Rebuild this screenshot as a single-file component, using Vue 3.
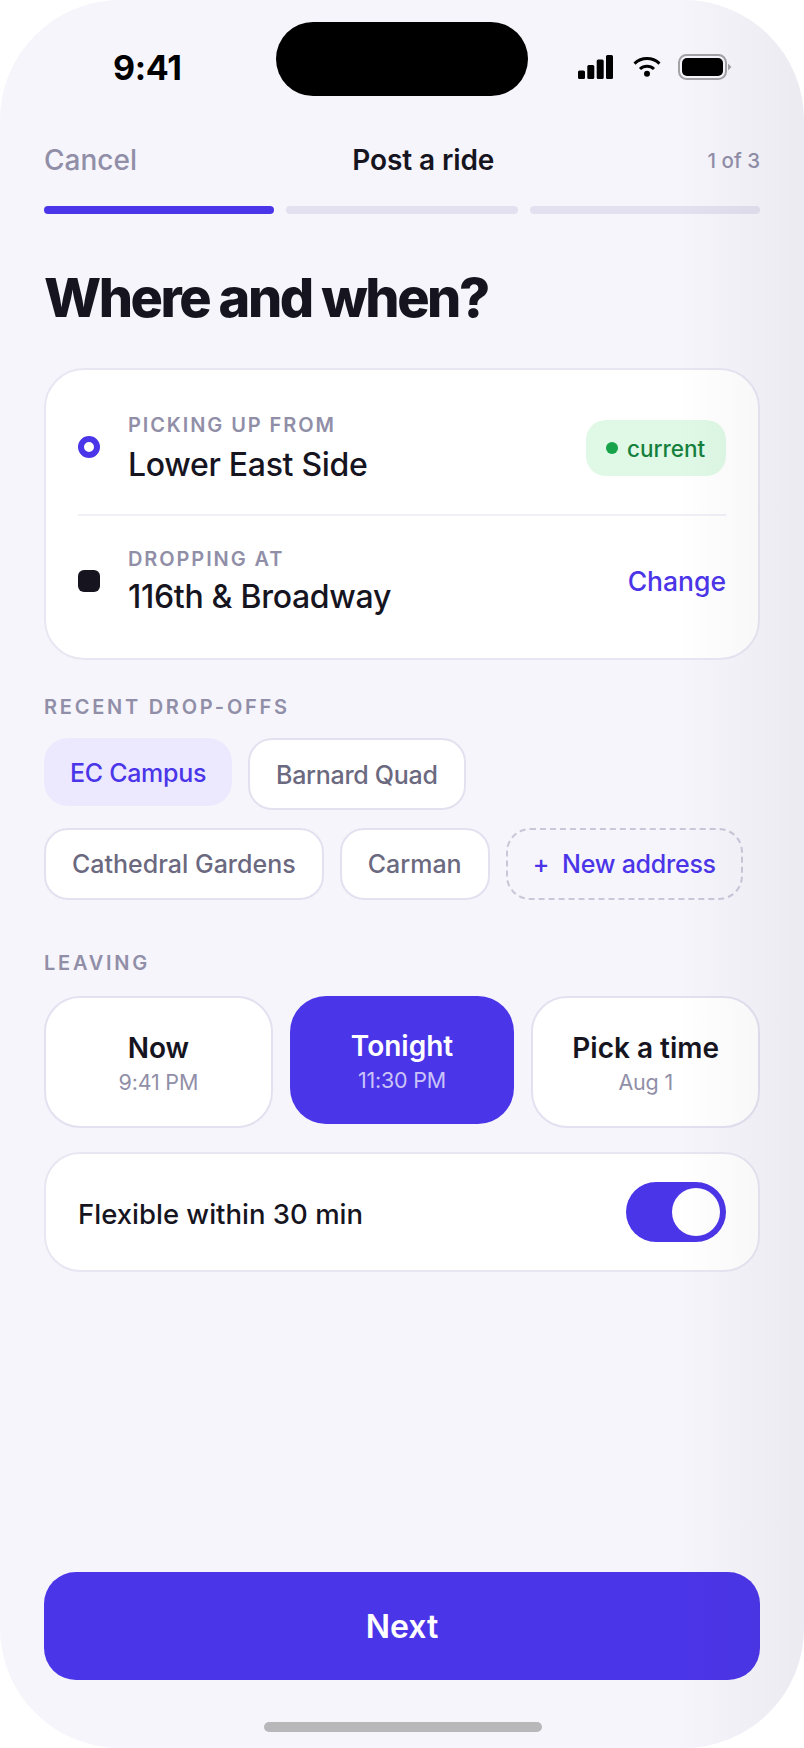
<script setup>
import { ref } from 'vue'

// первая строка чипов и вторая
const chipsTop = ref([
  { name: 'EC Campus', active: true },
  { name: 'Barnard Quad', active: false },
])
const chipsBottom = ref(['Cathedral Gardens', 'Carman'])

const times = ref([
  { id: 1, title: 'Now', sub: '9:41 PM', active: false },
  { id: 2, title: 'Tonight', sub: '11:30 PM', active: true },
  { id: 3, title: 'Pick a time', sub: 'Aug 1', active: false },
])
</script>

<template>
  <div class="phone">
    <div class="island"></div>

    <div class="status">
      <span class="clock">9:41</span>
      <div class="status-icons">
        <svg class="signal" width="35" height="24" viewBox="0 0 35 24">
          <rect x="0" y="15.4" width="7" height="8.6" rx="1.5" />
          <rect x="9.3" y="10" width="7" height="14" rx="1.5" />
          <rect x="18.7" y="4.5" width="7" height="19.5" rx="1.5" />
          <rect x="28" y="0" width="7" height="24" rx="1.5" />
        </svg>
        <svg class="wifi" width="28" height="21" viewBox="0 0 28 21">
          <path d="M1.5 7.6 A18 18 0 0 1 26.5 7.6" fill="none" stroke="#000" stroke-width="3" />
          <path d="M7 13 A10 10 0 0 1 21 13" fill="none" stroke="#000" stroke-width="3" />
          <circle cx="14" cy="17.8" r="3" fill="#000" />
        </svg>
        <svg class="battery" width="54" height="26" viewBox="0 0 54 26">
          <rect x="1" y="1" width="47" height="24" rx="7.5" fill="none" stroke="#a3a3a6" stroke-width="2" />
          <rect x="4" y="4" width="41" height="18" rx="5" fill="#000" />
          <path d="M50 9.5 L53.5 13 L50 16.5 Z" fill="#a3a3a6" />
        </svg>
      </div>
    </div>

    <div class="content">
      <div class="nav">
        <span class="cancel">Cancel</span>
        <span class="nav-title">Post a ride</span>
        <span class="step">1 of 3</span>
      </div>

      <div class="progress">
        <div class="seg seg-on"></div>
        <div class="seg seg-mid"></div>
        <div class="seg"></div>
      </div>

      <h1 class="title">Where and when?</h1>

      <div class="route card">
        <div class="route-row first">
          <span class="dot-from"></span>
          <div class="route-text">
            <div class="route-label">PICKING UP FROM</div>
            <div class="route-value">Lower East Side</div>
          </div>
          <span class="badge"><i class="badge-dot"></i>current</span>
        </div>
        <div class="divider"></div>
        <div class="route-row second">
          <span class="dot-to"></span>
          <div class="route-text">
            <div class="route-label">DROPPING AT</div>
            <div class="route-value">116th &amp; Broadway</div>
          </div>
          <span class="change">Change</span>
        </div>
      </div>

      <div class="section-label recent">RECENT DROP-OFFS</div>
      <div class="chips">
        <div class="chip-row chip-row-top">
          <span
            v-for="chip in chipsTop"
            :key="chip.name"
            class="chip"
            :class="{ 'chip-on': chip.active }"
          >{{ chip.name }}</span>
        </div>
        <div class="chip-row">
          <span v-for="name in chipsBottom" :key="name" class="chip">{{ name }}</span>
          <span class="chip chip-new"><b class="plus">+</b>New address</span>
        </div>
      </div>

      <div class="section-label leaving">LEAVING</div>
      <div class="times">
        <div
          v-for="t in times"
          :key="t.id"
          class="time"
          :class="{ 'time-on': t.active }"
        >
          <div class="time-title">{{ t.title }}</div>
          <div class="time-sub">{{ t.sub }}</div>
        </div>
      </div>

      <div class="flex-row card">
        <span class="flex-text">Flexible within 30 min</span>
        <div class="toggle"><div class="knob"></div></div>
      </div>

      <button class="next">Next</button>
      <div class="home"></div>
    </div>

    <div class="shade"></div>
  </div>
</template>

<style scoped>
.phone {
  position: relative;
  width: 804px;
  height: 1748px;
  overflow: hidden;
  border-radius: 120px;
  background: #f6f5fb;
  font-family: Inter, "Noto Sans", sans-serif;
  color: #16151f;
  display: flex;
  flex-direction: column;
}
.island {
  position: absolute;
  left: 276px;
  top: 22px;
  width: 252px;
  height: 74px;
  border-radius: 37px;
  background: #000;
}
.shade {
  position: absolute;
  inset: 0;
  pointer-events: none;
  background: linear-gradient(to right, rgba(40, 40, 70, 0) 84%, rgba(40, 40, 70, 0.05) 100%);
}

.status {
  height: 134px;
  padding: 0 72px 0 113px;
  display: flex;
  align-items: center;
  justify-content: space-between;
  flex-shrink: 0;
}
.clock {
  font-size: 34px;
  font-weight: 700;
  color: #000;
  letter-spacing: -0.3px;
}
.status-icons {
  display: flex;
  align-items: center;
  gap: 18px;
  margin-top: -1px;
}
.signal { fill: #000; margin-right: 2px; }
.battery { margin-left: -1px; }

.content {
  flex: 1;
  padding: 0 44px;
  display: flex;
  flex-direction: column;
}

.nav {
  height: 52px;
  display: flex;
  align-items: center;
  justify-content: space-between;
}
.cancel { font-size: 28px; font-weight: 500; color: #918fa8; }
.nav-title { font-size: 28px; font-weight: 600; margin-left: 2px; letter-spacing: -0.1px; }
.step { font-size: 20.5px; font-weight: 500; color: #918fa8; }

.progress {
  margin-top: 20px;
  display: flex;
  gap: 12px;
}
.seg {
  flex: 1 1 230px;
  height: 8px;
  border-radius: 4px;
  background: #e3e1ef;
}
.seg-mid { flex-basis: 232px; }
.seg-on { background: #4b35e8; }

.title {
  margin: 52px 0 38px;
  font-size: 54px;
  line-height: 64px;
  font-weight: 800;
  letter-spacing: -2.45px;
}

.card {
  background: #fff;
  border: 2px solid #e8e6f2;
}
.route {
  height: 292px;
  box-sizing: border-box;
  border-radius: 40px;
  padding: 10px 32px 0;
}
.route-row {
  display: flex;
  align-items: center;
}
.first { height: 134px; }
.second { height: 130px; }
.dot-from {
  width: 22px;
  height: 22px;
  box-sizing: border-box;
  border: 6px solid #4b35e8;
  border-radius: 50%;
  background: #fff;
}
.dot-to {
  width: 22px;
  height: 22px;
  border-radius: 6px;
  background: #16151f;
}
.route-text {
  flex: 1;
  margin-left: 28px;
  padding-top: 4px;
}
.second .route-text { padding-top: 2px; }
.route-label {
  font-size: 20px;
  line-height: 24px;
  font-weight: 600;
  letter-spacing: 1.9px;
  color: #918fa8;
}
.route-value {
  font-size: 32px;
  line-height: 42px;
  font-weight: 500;
  letter-spacing: -0.3px;
  margin-top: 7px;
}
.second .route-value { margin-top: 5px; }
.badge {
  width: 140px;
  height: 56px;
  box-sizing: border-box;
  margin-top: 2px;
  padding-left: 20px;
  border-radius: 20px;
  background: #dff9e6;
  color: #15803d;
  font-size: 22.5px;
  font-weight: 500;
  display: flex;
  align-items: center;
}
.badge-dot {
  width: 12px;
  height: 12px;
  border-radius: 50%;
  background: #16a34a;
  margin-right: 9px;
}
.change {
  font-size: 26.5px;
  font-weight: 500;
  color: #4b35e8;
}
.divider {
  height: 2px;
  background: #f1f0f7;
}

.section-label {
  font-size: 20px;
  line-height: 24px;
  font-weight: 600;
  letter-spacing: 2.75px;
  color: #918fa8;
}
.recent { margin-top: 35px; }
.leaving { margin-top: 51px; }

.chips {
  margin-top: 19px;
  display: flex;
  flex-direction: column;
  gap: 18px;
}
.chip-row {
  display: flex;
  align-items: flex-start;
  gap: 16px;
}
.chip {
  padding: 20px 26px;
  font-size: 25px;
  line-height: 28px;
  font-weight: 500;
  color: #6b6980;
  background: #fff;
  border: 2px solid #e3e1ef;
  border-radius: 24px;
}
.chip-row-top .chip {
  padding-top: 21px;
  padding-bottom: 19px;
  letter-spacing: -0.3px;
}
.chip-on {
  background: #ece9ff;
  color: #4b35e8;
  border: none;
}
.chip-new {
  padding: 20px 25px;
  background: transparent;
  border: 2px dashed #c9c7d8;
  color: #4b35e8;
  letter-spacing: -0.25px;
}
.plus {
  font-weight: 500;
  margin-right: 13px;
}

.times {
  margin-top: 21px;
  display: flex;
  align-items: flex-start;
  gap: 17px;
}
.time {
  flex: 1;
  padding: 32px 0 31px;
  text-align: center;
  background: #fff;
  border: 2px solid #e3e1ef;
  border-radius: 36px;
}
.time-on {
  background: #4b35e8;
  border: none;
  color: #fff;
}
.time-title {
  font-size: 28px;
  line-height: 36px;
  font-weight: 600;
}
.time-sub {
  margin-top: 4px;
  font-size: 21.5px;
  line-height: 25px;
  letter-spacing: -0.2px;
  color: #918fa8;
}
.time-on .time-sub { color: #c9c3f8; }

.flex-row {
  margin-top: 24px;
  height: 120px;
  box-sizing: border-box;
  border-radius: 36px;
  padding: 0 32px;
  display: flex;
  align-items: center;
  justify-content: space-between;
}
.flex-text { font-size: 27.5px; font-weight: 500; padding-top: 3px; }
.toggle {
  width: 100px;
  height: 60px;
  box-sizing: border-box;
  border-radius: 30px;
  background: #4b35e8;
  padding: 6px;
  display: flex;
  justify-content: flex-end;
}
.knob {
  width: 48px;
  height: 48px;
  border-radius: 50%;
  background: #fff;
}

.next {
  margin-top: auto;
  height: 108px;
  border: none;
  border-radius: 32px;
  background: #4b35e8;
  color: #fff;
  font-family: inherit;
  font-size: 32px;
  font-weight: 600;
}
.home {
  margin: 42px 0 16px 220px;
  width: 278px;
  height: 10px;
  border-radius: 5px;
  background: #b8b8ba;
}
</style>
